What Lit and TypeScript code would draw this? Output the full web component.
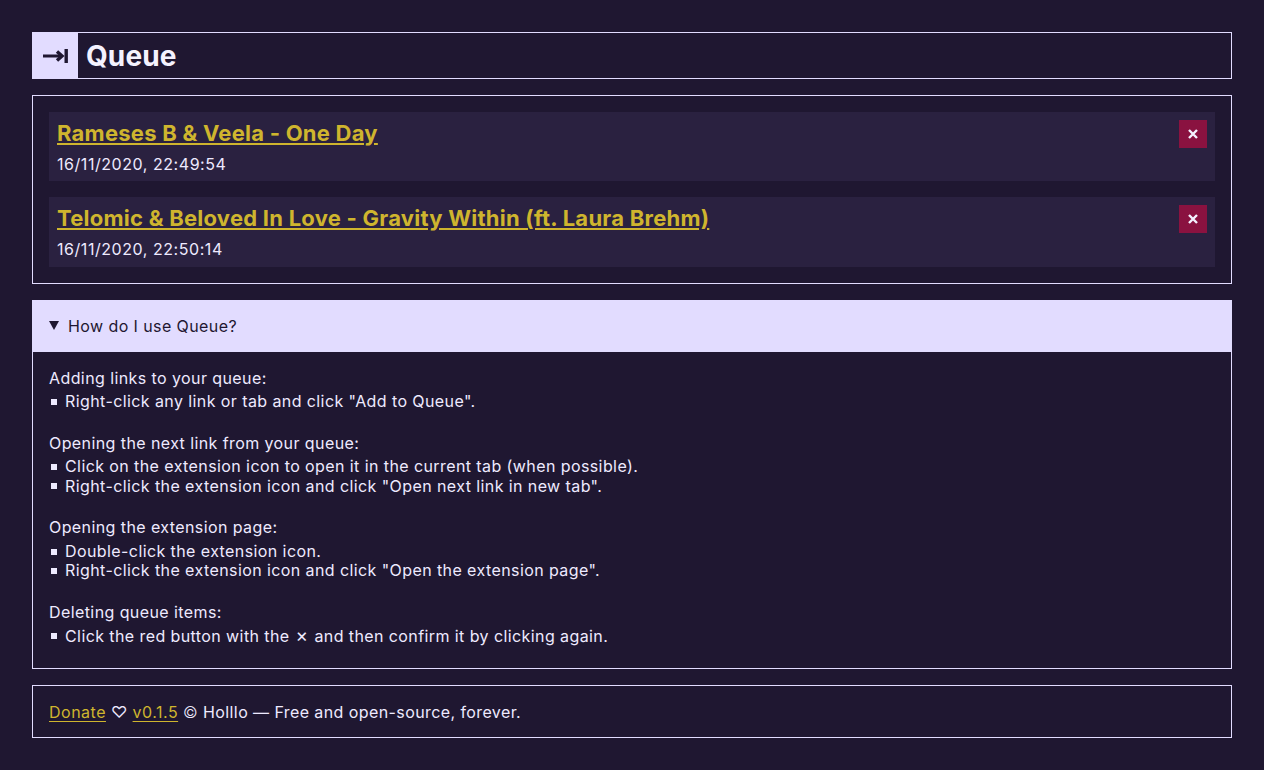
import { LitElement, html, css } from "lit";
import { customElement } from "lit/decorators.js";

const help: [string, string[]][] = [
  ["Adding links to your queue:", ['Right-click any link or tab and click "Add to Queue".']],
  ["Opening the next link from your queue:", ["Click on the extension icon to open it in the current tab (when possible).", 'Right-click the extension icon and click "Open next link in new tab".']],
  ["Opening the extension page:", ["Double-click the extension icon.", 'Right-click the extension icon and click "Open the extension page".']],
  ["Deleting queue items:", ["Click the red button with the × and then confirm it by clicking again."]],
];

const items = [
  ["Rameses B & Veela - One Day", "16/11/2020, 22:49:54"],
  ["Telomic & Beloved In Love - Gravity Within (ft. Laura Brehm)", "16/11/2020, 22:50:14"],
];

@customElement("app-root")
export class AppRoot extends LitElement {
  static styles = css`
    :host { display: block; min-height: 770px; box-sizing: border-box; background: #1f1731; color: #eeeaff; font-family: Inter, sans-serif; font-size: 16px; line-height: 19.36px; letter-spacing: 0.41px; padding: 32px; }
    * { box-sizing: border-box; }
    main { display: flex; flex-direction: column; gap: 16px; }
    a { color: #cfb52e; }
    .head { display: flex; align-items: center; gap: 8px; border: 1px solid #e2dcff; height: 47px; }
    .logo { width: 46px; height: 47px; margin: -1px 0 -1px -1px; background: #e2dcff; display: flex; align-items: center; justify-content: center; flex: none; }
    h1 { margin: 0; font-size: 28px; line-height: 34px; font-weight: 700; letter-spacing: 0.1px; color: #f4f2ff; }
    .queue { border: 1px solid #e2dcff; padding: 16px 16px 16.4px; display: flex; flex-direction: column; gap: 16px; }
    .item { background: #2a2140; padding: 8px; height: 69.3px; display: flex; justify-content: space-between; align-items: flex-start; }
    .item a { font-size: 22px; line-height: 27.85px; font-weight: 700; letter-spacing: 0.245px; display: block; margin-bottom: 6.75px; }
    .date { letter-spacing: 0.55px; }
    .del { width: 28px; height: 28px; background: #8a1240; border: 0; padding: 0; display: flex; align-items: center; justify-content: center; }
    details { border: 1px solid #e2dcff; border-top: 0; }
    summary { background: #e2dcff; color: #1f1731; padding: 16px; line-height: 20px; margin: 0 -1px; display: flex; align-items: center; gap: 9px; }
    .tri { width: 0; height: 0; margin-left: 1px; border-left: 5px solid transparent; border-right: 5px solid transparent; border-top: 9px solid #1f1731; }
    .help { padding: 17px 16px 21.8px; }
    p { margin: 0 0 4px; }
    p:first-child { margin-bottom: 3.5px; }
    ul { margin: 0 0 22.6px; padding: 0; list-style: none; }
    ul:last-child { margin-bottom: 0; }
    li { display: flex; align-items: center; gap: 8px; }
    li::before { content: ""; width: 6px; height: 6px; margin-left: 2px; background: #eeeaff; flex: none; }
    .times { font-size: 19px; line-height: 1px; margin: 0 1px; }
    footer { border: 1px solid #e2dcff; padding: 17px 16px 15px; }
    footer a { text-underline-offset: 3px; letter-spacing: 0.5px; }
    .copy { font-weight: 300; }
  `;

  private line(x: string) {
    const parts = x.split("×");
    return parts.length === 2
      ? html`<span>${parts[0]}<span class="times">×</span>${parts[1]}</span>`
      : html`<span>${x}</span>`;
  }

  render() {
    return html`<main>
      <header class="head">
        <div class="logo">
          <svg width="25" height="14" viewBox="0 0 25 14" fill="none" stroke="#1f1731" stroke-width="3">
            <path d="M0 7H18"></path>
            <path d="M14 2.5L19 7L14 11.5" stroke-width="3.4"></path>
            <path d="M23.2 0V14" stroke-width="3.4"></path>
          </svg>
        </div>
        <h1>Queue</h1>
      </header>
      <section class="queue">
        ${items.map(([t, d]) => html`<div class="item">
          <div><a href="#">${t}</a><div class="date">${d}</div></div>
          <button class="del" aria-label="Delete">
            <svg width="10" height="10" viewBox="0 0 10 10" stroke="#f4f2ff" stroke-width="2.4"><path d="M1 1L9 9M9 1L1 9"></path></svg>
          </button>
        </div>`)}
      </section>
      <details open>
        <summary><span class="tri"></span>How do I use Queue?</summary>
        <div class="help">
          ${help.map(([h, l]) => html`<p>${h}</p><ul>${l.map((x) => html`<li>${this.line(x)}</li>`)}</ul>`)}
        </div>
      </details>
      <footer><a href="#">Donate</a> ♡ <a href="#">v0.1.5</a> <span class="copy">©</span> Holllo — Free and open-source, forever.</footer>
    </main>`;
  }
}
